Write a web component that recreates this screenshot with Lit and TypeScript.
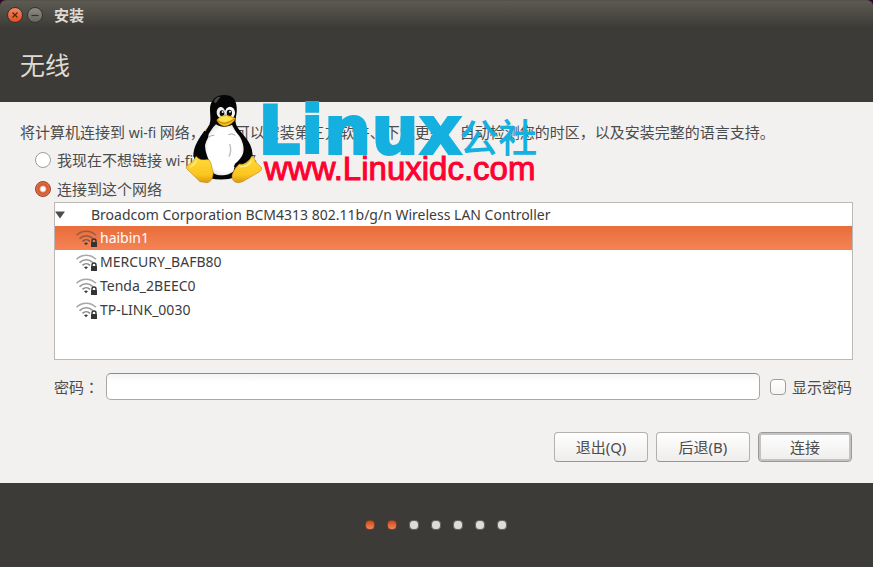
import { LitElement, html, css, svg } from "lit";
import { customElement, state } from "lit/decorators.js";
import { classMap } from "lit/directives/class-map.js";

const networks = ["haibin1", "MERCURY_BAFB80", "Tenda_2BEEC0", "TP-LINK_0030"];

@customElement("wifi-icon")
class WifiIcon extends LitElement {
  static styles = css`
    :host { display: block; width: 24px; height: 20px; }
    svg { display: block; }
  `;
  render() {
    return html`<svg width="24" height="20" viewBox="0 0 24 20" aria-hidden="true">
      <g fill="none" stroke="#3c3c3c" stroke-width="1.6">
        <path d="M.5 6.300C6 .9 14.500.9 20 6.300" opacity=".45" />
        <path d="M3.500 9.600C7.500 5.700 13 5.700 17 9.600" opacity=".5" />
        <path d="M6.500 12.400C8.700 10.200 11.800 10.200 14 12.400" opacity=".6" />
      </g>
      <path d="M8 14.300Q10 12.800 12 14.300L10 16.300Z" fill="#3c3c3c" />
      <path d="M16 13.500V12a2 2 0 0 1 4 0V13.500" fill="none" stroke="#333" stroke-width="1.400" />
      <rect x="15" y="13" width="6" height="5" rx=".6" fill="#333" />
    </svg>`;
  }
}

@customElement("tux-banner")
class TuxBanner extends LitElement {
  static styles = css`
    :host { display: flex; pointer-events: none; white-space: nowrap; }
    .tux { display: block; flex: none; }
    .words { display: flex; flex-direction: column; padding-top: 6px; margin-left: -8px; }
    .name { display: flex; align-items: flex-start; color: #14b0e0; height: 54px; }
    .linux { font: bold 67px/66px "DejaVu Sans", sans-serif; -webkit-text-stroke: 2px #14b0e0; }
    .club { font: 500 39px/42px "Noto Sans CJK SC", sans-serif; padding-top: 16px; margin-left: -3px; }
    .site { font: 33px/34px "Liberation Sans", sans-serif; -webkit-text-stroke: 1px #ff0030; color: #ff0030; padding-left: 6px; }
  `;
  render() {
    return html`
      <svg class="tux" width="82" height="94" viewBox="0 0 246 282" aria-hidden="true">
        <defs>
          <linearGradient id="foot" x1="0" y1="0" x2="0" y2="1">
            <stop offset="0" stop-color="#ffdc3c" />
            <stop offset=".7" stop-color="#fbc51f" />
            <stop offset="1" stop-color="#d99a10" />
          </linearGradient>
          <radialGradient id="belly" cx=".5" cy=".5" r=".6">
            <stop offset=".7" stop-color="#fff" />
            <stop offset="1" stop-color="#d4d4d4" />
          </radialGradient>
        </defs>
        ${svg`
        <path fill="#050505" d="M121 9C94 9 78 27 78 52C78 70 82 83 76 99C68 117 54 130 44 148C34 165 27 183 31 201L60 225L75 258Q118 268 154 256L176 214L204 196C207 178 199 158 187 143C174 123 159 110 155 92C153 78 160 67 158 45C156 22 145 9 121 9Z"/>
        <path fill="url(#belly)" d="M88 105C80 117 68 132 64 150C61 166 66 183 72 199C81 215 80 235 91 245C109 255 138 249 149 237C151 216 166 206 175 190C184 171 176 147 166 132C154 119 148 106 144 98C128 106 109 107 96 97Z"/>
        <path fill="#050505" d="M61 116C47 137 27 163 28 194Q48 210 66 198C57 181 60 160 69 143C75 132 77 122 61 116Z"/>
        <path fill="#050505" d="M157 103C164 123 180 137 184 154C187 171 182 186 170 201L153 215L149 225L174 219L205 197C208 176 199 153 185 137Z"/>
        <path fill="none" stroke="#bdbdbd" stroke-width="4" d="M137 156Q144 176 135 194"/>
        <path fill="none" stroke="#aaa" stroke-width="3" d="M72 136Q83 129 91 130M133 128Q144 122 154 130"/>
        <ellipse cx="111" cy="62" rx="13" ry="17" fill="#eee" transform="rotate(-8 111 62)"/>
        <ellipse cx="138" cy="62" rx="15" ry="18" fill="#fff"/>
        <ellipse cx="114" cy="64" rx="7" ry="9" fill="#080808"/>
        <ellipse cx="136" cy="63" rx="8" ry="10" fill="#080808"/>
        <circle cx="116" cy="60" r="3" fill="#eee"/><circle cx="138" cy="59" r="3" fill="#eee"/>
        <path fill="#f5bd18" stroke="#b67b08" stroke-width="1" d="M98 84Q112 69 126 69Q142 72 154 79Q153 87 143 94Q131 105 119 102Q104 99 98 84Z"/>
        <path fill="#ffe053" d="M103 82Q114 71 127 72L147 80Q130 90 119 91Q109 90 103 82Z"/>
        <path fill="none" stroke="#9b6708" stroke-width="2" d="M101 86Q111 95 122 94Q138 91 152 81"/>
        <path fill="url(#foot)" stroke="#b67b08" stroke-width="1.5" d="M36 193Q48 207 65 203Q76 200 80 211L88 244Q85 271 69 272L48 269L8 230Q4 225 12 219Q28 211 36 193Z"/>
        <path fill="url(#foot)" stroke="#b67b08" stroke-width="1.5" d="M203 193Q210 193 216 211L232 226Q236 233 227 239L178 268Q164 276 151 269Q140 260 146 244Q153 226 166 216Q189 222 203 193Z"/>
        <path fill="none" stroke="#fff08a" stroke-width="4" stroke-linecap="round" d="M37 207Q31 218 20 225M202 208Q192 225 169 224"/>
        <path fill="#777" opacity=".6" d="M91 24Q99 13 110 14Q101 24 96 33Q89 34 91 24Z"/>
        `}
      </svg>
      <div class="words">
        <div class="name"><span class="linux">Linux</span><span class="club">公社</span></div>
        <div class="site">www.Linuxidc.com</div>
      </div>`;
  }
}

@customElement("app-root")
class AppRoot extends LitElement {
  @state() private selected = 0;
  @state() private reveal = false;

  static styles = css`
    :host {
      display: flex;
      flex-direction: column;
      position: relative;
      min-height: 100vh;
      background: #f2f1f0;
      color: #4c4c4c;
      font: 15px/22px "Noto Sans", "Noto Sans CJK SC", sans-serif;
    }
    * { box-sizing: border-box; }
    button, input { font: inherit; color: inherit; margin: 0; }
    .head { background: #3c3b37; color: #dfdbd2; height: 102px; }
    .bar {
      display: flex;
      align-items: center;
      gap: 4px;
      height: 28px;
      padding: 0 7px;
      border-top: 1px solid #55534b;
      border-radius: 6px 6px 0 0;
      background: linear-gradient(#5c5a51, #3c3b37);
    }
    .frame { background: #300a24; }
    .win { width: 16px; height: 16px; padding: 0; border: 1px solid #33322e; border-radius: 50%; background: linear-gradient(#8c8a83, #68665f); }
    .win.close { background: linear-gradient(#f58764, #e2501e); }
    .win svg { display: block; }
    .caption { font-size: 15px; font-weight: bold; line-height: 22px; padding-left: 7px; }
    .title { margin: 0; padding: 17px 20px; font-size: 25px; line-height: 40px; font-weight: normal; }
    .main { flex: 1; padding: 19px 20px 21px; }
    .lead { margin: 0; }
    .latin { font-size: 14px; }
    .tc { font-family: "Noto Sans CJK TC", sans-serif; }
    .choice { display: flex; align-items: center; gap: 6px; padding-left: 15px; }
    .choice.first { height: 32px; }
    .choice.second { height: 26px; }
    .radio {
      appearance: none;
      width: 16px;
      height: 16px;
      border: 1px solid #a09d99;
      border-radius: 50%;
      background: #fff;
    }
    .radio:checked { border-color: #9a4326; background: radial-gradient(circle, #fff 0 2px, #d0542a 4px, #e2744c 7px); }
    .tree { margin: 0 0 0 34px; padding: 0; list-style: none; height: 158px; border: 1px solid #bcb8b3; background: #fff; color: #3c3c3c; font-size: 14px; }
    .adapter { display: flex; align-items: center; height: 23px; }
    .arrow { width: 10px; margin-right: 26px; }
    .net { display: flex; align-items: center; width: 100%; height: 24px; padding: 0 0 0 21px; border: 0; background: none; text-align: left; }
    .net.on { color: #fff; background: linear-gradient(#e86d3a, #f68355); }
    wifi-icon { margin-top: 2px; }
    .pass { display: flex; align-items: center; margin: 13px 1px 0 34px; }
    .field {
      flex: 1;
      min-width: 0;
      height: 27px;
      margin: 0 10px 0 7px;
      padding: 0 8px;
      border: 1px solid #aaa6a1;
      border-top-color: #8f8c88;
      border-radius: 5px;
      background: linear-gradient(#f4f4f4, #fff 8px);
    }
    .show { display: flex; align-items: center; gap: 6px; }
    .check { appearance: none; width: 16px; height: 16px; border: 1px solid #a09d99; border-radius: 4px; background: linear-gradient(#fff, #f4f4f3); }
    .check:checked { background: #dd5a2b; }
    .actions { display: flex; justify-content: flex-end; gap: 8px; padding: 32px 1px 0 0; }
    .btn {
      width: 94px;
      height: 30px;
      padding: 0;
      border: 1px solid #b4b0ac;
      border-bottom-color: #99958f;
      border-radius: 4px;
      background: linear-gradient(#fff, #eeedec);
    }
    .btn.primary { border-color: #999; box-shadow: inset 0 0 0 2px #c4c3c2; }
    .foot { display: flex; justify-content: center; align-items: center; gap: 12px; height: 84px; padding-right: 2px; background: #3c3b37; }
    .dot { width: 10px; height: 10px; border: 1px solid #62615d; border-radius: 4px; background: #dcdcdb; }
    .dot.done { border-color: #74402a; background: linear-gradient(#d34b16, #ee8660); }
    .banner { position: absolute; left: 184px; top: 92px; }
  `;

  render() {
    return html`
      <header class="head">
        <div class="frame">
          <div class="bar">
            <button class="win close" aria-label="关闭">
              <svg width="14" height="14" viewBox="0 0 14 14"><path d="M4.500 4.500l5 5m0-5l-5 5" stroke="#5a2412" stroke-width="1.300" /></svg>
            </button>
            <button class="win" aria-label="最小化">
              <svg width="14" height="14" viewBox="0 0 14 14"><path d="M3.500 7.500h7" stroke="#33322e" stroke-width="1.200" /></svg>
            </button>
            <span class="caption">安装</span>
          </div>
        </div>
        <h1 class="title">无线</h1>
      </header>
      <main class="main">
        <p class="lead">将计算机连接到<span class="latin"> wi-fi </span>网络，您将可以安装第三方软件、下载更新、自动检测您的时区，以及安装完整的语言支持。</p>
        <label class="choice first"><input class="radio" type="radio" name="mode" /><span>我现在不想链接<span class="latin"> wi-fi </span>无线网络</span></label>
        <label class="choice second"><input class="radio" type="radio" name="mode" checked />连接到这个网络</label>
        <ul class="tree">
          <li class="adapter">
            <svg class="arrow" width="10" height="8" viewBox="0 0 10 8"><path d="M0 .5h10L5 7.500z" fill="#4c4c4c" /></svg>
            Broadcom Corporation BCM4313 802.11b/g/n Wireless LAN Controller
          </li>
          ${networks.map((name, i) => html`<li>
            <button class=${classMap({ net: true, on: i === this.selected })} @click=${() => (this.selected = i)}>
              <wifi-icon></wifi-icon>${name}
            </button>
          </li>`)}
        </ul>
        <div class="pass">
          <label for="pw">密码<span class="tc">：</span></label>
          <input id="pw" class="field" type=${this.reveal ? "text" : "password"} />
          <label class="show"><input class="check" type="checkbox" @change=${() => (this.reveal = !this.reveal)} />显示密码</label>
        </div>
        <div class="actions">
          <button class="btn">退出(Q)</button>
          <button class="btn">后退(B)</button>
          <button class="btn primary">连接</button>
        </div>
      </main>
      <footer class="foot">
        ${[0, 1, 2, 3, 4, 5, 6].map((i) => html`<span class=${classMap({ dot: true, done: i < 2 })}></span>`)}
      </footer>
      <tux-banner class="banner"></tux-banner>
    `;
  }
}
